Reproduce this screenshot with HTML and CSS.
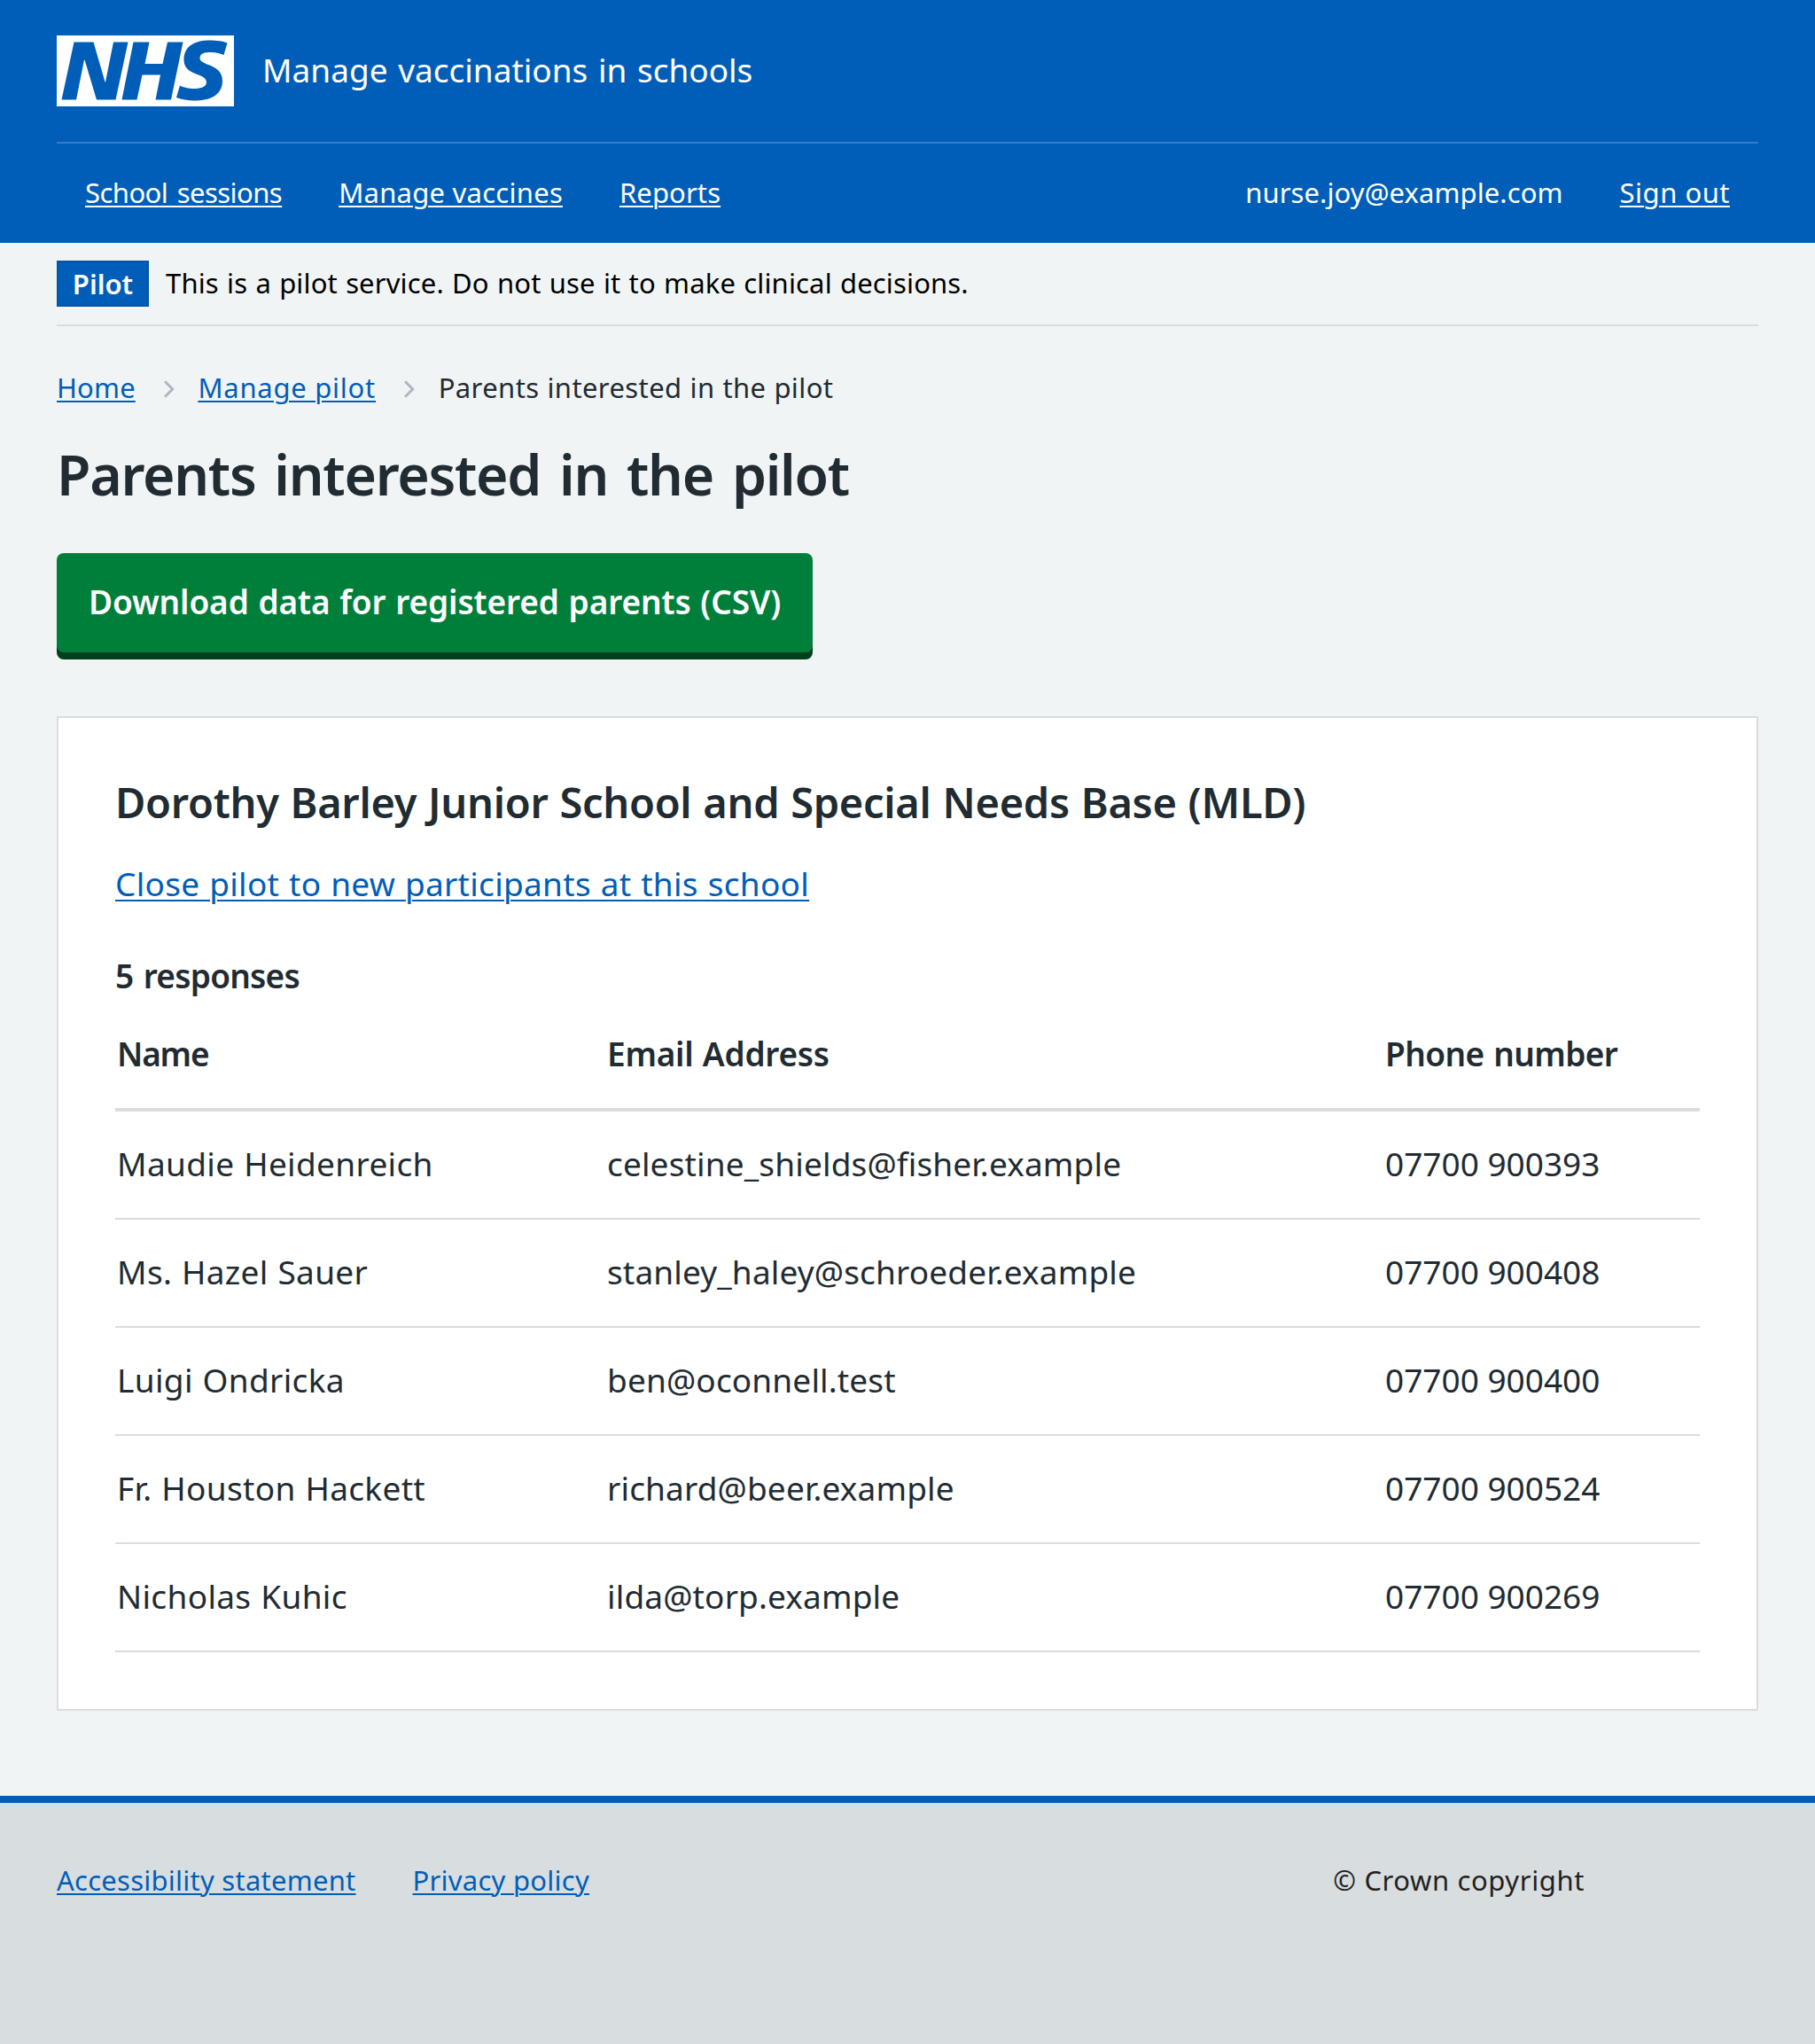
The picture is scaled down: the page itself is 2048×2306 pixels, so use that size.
FILE: index.html
```html
<!DOCTYPE html>
<html lang="en">
<head>
<meta charset="utf-8">
<title>Parents interested in the pilot</title>
<link rel="stylesheet" href="styles.css">
</head>
<body>
<header class="header">
  <div class="header-top">
    <svg class="logo" viewBox="0 0 40 16" role="img" aria-label="NHS">
      <path fill="#fff" d="M0 0h40v16H0z"/>
      <path fill="#005eb8" d="M3.9 1.5h4.4l2.6 9h.1l1.8-9h3.3l-2.8 13H9l-2.7-9h-.1l-1.8 9H1.1M17.3 1.5h3.6l-1 4.9h4L25 1.5h3.5l-2.7 13h-3.5l1.1-5.6h-4.1l-1.2 5.6h-3.4M37.7 4.4c-.7-.3-1.6-.6-2.9-.6-1.4 0-2.5.2-2.5 1.3 0 1.8 5.1 1.2 5.1 5.1 0 3.6-3.3 4.5-6.4 4.5-1.3 0-2.9-.3-4-.7l.8-2.7c.7.4 2.1.7 3.2.7s2.8-.2 2.8-1.5c0-2.1-5.1-1.3-5.1-5 0-3.4 2.9-4.4 5.8-4.4 1.6 0 3.1.2 4 .6"/>
    </svg>
    <span class="service">Manage vaccinations in schools</span>
  </div>
  <nav class="nav">
    <a class="nav-link nav-sessions" href="#">School sessions</a>
    <a class="nav-link nav-vaccines" href="#">Manage vaccines</a>
    <a class="nav-link nav-reports" href="#">Reports</a>
    <span class="nav-user">nurse.joy@example.com</span>
    <a class="nav-link nav-out" href="#">Sign out</a>
  </nav>
</header>
<div class="container">
  <div class="phase">
    <strong class="tag">Pilot</strong>
    <span class="phase-text">This is a pilot service. Do not use it to make clinical decisions.</span>
  </div>
  <nav class="crumbs">
    <a class="link" href="#">Home</a>
    <svg class="chevron" viewBox="0 0 12 20"><path d="M2 2.2l7.8 7.8L2 17.8"/></svg>
    <a class="link crumb-pilot" href="#">Manage pilot</a>
    <svg class="chevron" viewBox="0 0 12 20"><path d="M2 2.2l7.8 7.8L2 17.8"/></svg>
    <span class="crumb-current">Parents interested in the pilot</span>
  </nav>
  <main>
    <h1 class="title">Parents interested in the pilot</h1>
    <button class="button">Download data for registered parents (CSV)</button>
    <section class="card">
      <h2 class="school">Dorothy Barley Junior School and Special Needs Base (MLD)</h2>
      <p class="close"><a class="link" href="#">Close pilot to new participants at this school</a></p>
      <h3 class="count">5 responses</h3>
      <table class="table">
        <thead><tr><th class="c1">Name</th><th class="c2">Email Address</th><th class="c3">Phone number</th></tr></thead>
        <tbody>
          <tr><td class="name">Maudie Heidenreich</td><td class="email">celestine_shields@fisher.example</td><td>07700 900393</td></tr>
          <tr><td class="name">Ms. Hazel Sauer</td><td class="email">stanley_haley@schroeder.example</td><td>07700 900408</td></tr>
          <tr><td class="name">Luigi Ondricka</td><td class="email">ben@oconnell.test</td><td>07700 900400</td></tr>
          <tr><td class="name">Fr. Houston Hackett</td><td class="email">richard@beer.example</td><td>07700 900524</td></tr>
          <tr><td class="name">Nicholas Kuhic</td><td class="email">ilda@torp.example</td><td>07700 900269</td></tr>
        </tbody>
      </table>
    </section>
  </main>
</div>
<footer class="footer">
  <a class="link" href="#">Accessibility statement</a>
  <a class="link" href="#">Privacy policy</a>
  <span class="copyright">© Crown copyright</span>
</footer>
</body>
</html>
```
FILE: styles.css
```css
* { box-sizing: border-box; }
body {
  margin: 0;
  min-height: 2306px;
  display: flex;
  flex-direction: column;
  background: #f0f4f5;
  color: #212b32;
  font: 37px/56px "Noto Sans", "Open Sans", sans-serif;
}
h1, h2, h3, p { margin: 0; font-weight: 600; }
a { text-decoration-thickness: 2px; text-underline-offset: 3px; }
.link { color: #005eb8; }

.header { background: #005eb8; color: #fff; padding: 0 64px; }
.header-top {
  display: flex;
  align-items: center;
  height: 162px;
  border-bottom: 2px solid #337ec6;
}
.logo { width: 200px; height: 80px; }
.service { margin-left: 32px; padding-bottom: 3px; word-spacing: 2px; }
.nav {
  display: flex;
  align-items: center;
  gap: 64px;
  height: 112px;
  padding: 0 32px 2px;
  font-size: 31px;
}
.nav-link { color: #fff; }
.nav-sessions { letter-spacing: -.55px; word-spacing: 3px; }
.nav-vaccines { letter-spacing: .25px; }
.nav-reports { letter-spacing: .1px; }
.nav-out { letter-spacing: .5px; }
.nav-user { margin-left: auto; letter-spacing: .08px; }

.container { padding: 0 64px; }
.phase {
  display: flex;
  align-items: center;
  gap: 19px;
  height: 94px;
  border-bottom: 2px solid #d8dde0;
  color: #000;
  font-size: 31px;
}
.tag {
  width: 104px;
  height: 52px;
  border: 2px solid #0055a6;
  background: #005eb8;
  color: #fff;
  font-weight: 600;
  line-height: 48px;
  text-align: center;
}
.phase-text { padding-bottom: 2px; letter-spacing: .15px; word-spacing: 1px; }
.crumbs {
  display: flex;
  align-items: center;
  margin-top: 45px;
  font-size: 31px;
  line-height: 48px;
  letter-spacing: .15px;
}
.crumb-pilot { letter-spacing: .75px; }
.crumb-current { letter-spacing: .4px; word-spacing: .5px; }
.chevron {
  width: 12px;
  height: 20px;
  margin: 4px 26.6px 0 32px;
  fill: none;
  stroke: #aeb7bd;
  stroke-width: 3;
  stroke-linecap: round;
  stroke-linejoin: round;
}
.title { margin-top: 38px; font-size: 62.5px; line-height: 72px; letter-spacing: -1.3px; word-spacing: 6px; }
.button {
  display: block;
  width: 853px;
  margin-top: 53px;
  padding: 27px 0 29px;
  border: 0;
  border-radius: 8px;
  background: #007f3b;
  box-shadow: 0 8px 0 #00401e;
  color: #fff;
  font: inherit;
  font-weight: 600;
  letter-spacing: -.1px;
  word-spacing: 1.2px;
  white-space: nowrap;
}
.card {
  margin: 72px 0 96px;
  padding: 65px 64px 64px;
  border: 2px solid #d8dde0;
  background: #fff;
}
.school { font-size: 47px; line-height: 60px; letter-spacing: -.3px; word-spacing: 1px; }
.close { margin-top: 34px; font-weight: 400; letter-spacing: .3px; word-spacing: .85px; }
.close .link { text-underline-offset: 4px; }
.count { margin-top: 48px; font-size: 37px; letter-spacing: -.75px; word-spacing: 2.5px; }
.table { width: 100%; margin-top: 32px; border-collapse: separate; border-spacing: 0; table-layout: fixed; }
.c1 { width: 553px; letter-spacing: -1.2px; }
.c2 { width: 878px; letter-spacing: -.25px; word-spacing: 1px; }
.c3 { letter-spacing: -.6px; word-spacing: 1.8px; }
th { padding: 0 2px 33px; border-bottom: 4px solid #d8dde0; text-align: left; font-weight: 600; white-space: nowrap; }
td { padding: 31px 2px 33px; border-bottom: 2px solid #d8dde0; white-space: nowrap; }
.name { letter-spacing: .34px; word-spacing: .8px; }
.email { letter-spacing: .15px; }

.footer {
  flex: 1;
  display: flex;
  align-items: flex-start;
  gap: 64px;
  padding: 63px 64px 0;
  border-top: 8px solid #005eb8;
  background: #d8dde0;
  font-size: 31px;
  line-height: 48px;
  letter-spacing: .25px;
}
.copyright { margin: 0 196px 0 auto; color: #231f20; letter-spacing: .6px; }
```
